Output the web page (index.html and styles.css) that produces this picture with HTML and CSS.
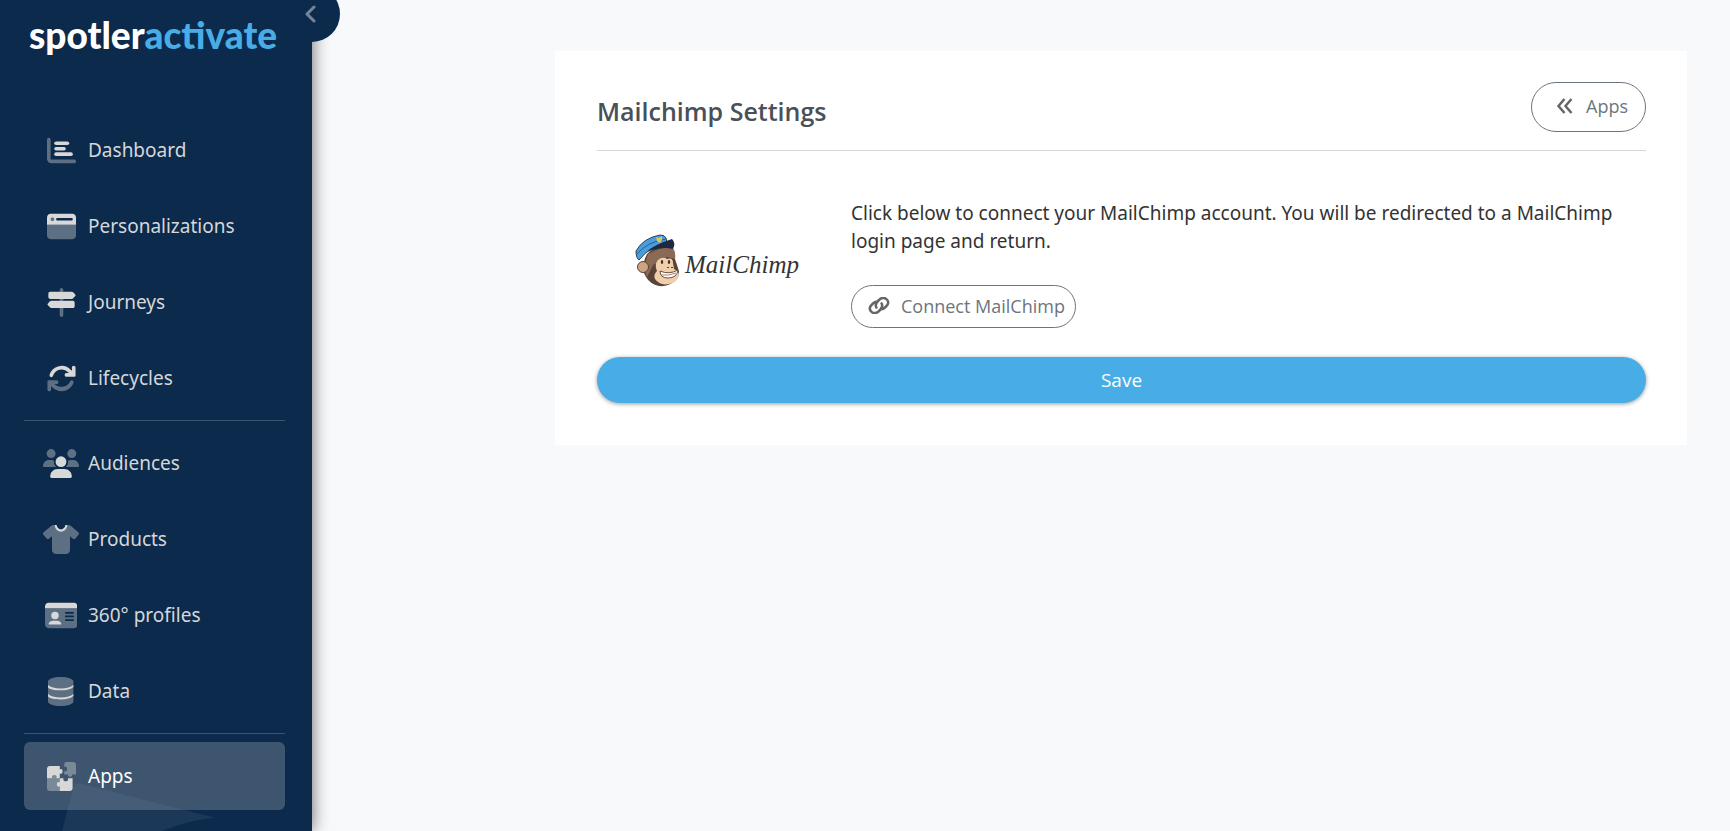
FILE: index.html
```html
<!DOCTYPE html>
<html lang="en">
    <head>
        <meta charset="UTF-8">
        <meta name="viewport" content="width=device-width, initial-scale=1.0">
        <title>Mailchimp Settings</title>
        <link rel="stylesheet" href="styles.css">
    </head>
    <body>
        <div class="layout">
            <aside class="sidebar">
                <button class="toggle" type="button" aria-label="Collapse menu">
                    <svg viewBox="0 0 12 18"><path d="M10 2L3 9l7 7"/></svg>
                </button>
                <a class="brand" href="#">spotler<span>activate</span></a>
                <nav class="nav">
                    <a class="nav-item" href="#">
                        <span class="nav-icon"><svg viewBox="0 0 512 512">
                            <path class="dim" d="M32 32c17.700 0 32 14.300 32 32v336c0 8.800 7.200 16 16 16h400c17.700 0 32 14.300 32 32s-14.300 32-32 32H80c-44.200 0-80-35.800-80-80V64c0-17.700 14.300-32 32-32z"/>
                            <rect x="128" y="96" width="264" height="64" rx="32"/>
                            <rect x="128" y="192" width="204" height="64" rx="32"/>
                            <rect x="128" y="288" width="328" height="64" rx="32"/>
                        </svg></span>
                        Dashboard
                    </a>
                    <a class="nav-item" href="#">
                        <span class="nav-icon"><svg viewBox="0 0 512 512">
                            <path class="dim" d="M0 224h512v192c0 35-29 64-64 64H64c-35 0-64-29-64-64z"/>
                            <path fill-rule="evenodd" d="M64 32h384c35 0 64 29 64 64v128H0V96c0-35 29-64 64-64zM184 104a24 24 0 0 0 0 48h248a24 24 0 0 0 0-48zM96 96a32 32 0 1 0 0 64 32 32 0 0 0 0-64z"/>
                            <circle class="dim" cx="96" cy="128" r="32"/>
                        </svg></span>
                        Personalizations
                    </a>
                    <a class="nav-item" href="#">
                        <span class="nav-icon"><svg viewBox="0 0 512 512">
                            <path class="dim" d="M224 64V32a32 32 0 0 1 64 0v32zM224 192h64v32h-64zM224 352h64v128a32 32 0 0 1-64 0z"/>
                            <path d="M56 64h382c9 0 17 4 23 10l38 42c7 7 7 17 0 24l-38 42c-6 6-14 10-23 10H56c-18 0-32-14-32-32V96c0-18 14-32 32-32z"/>
                            <path d="M456 224H74c-9 0-17 4-23 10l-38 42c-7 7-7 17 0 24l38 42c6 6 14 10 23 10h382c18 0 32-14 32-32v-64c0-18-14-32-32-32z"/>
                        </svg></span>
                        Journeys
                    </a>
                    <a class="nav-item" href="#">
                        <span class="nav-icon"><svg viewBox="0 0 512 512">
                            <path class="line" d="M76 200A190 190 0 0 1 396 124l44 44"/>
                            <path d="M472 32c18 0 32 14 32 32v144c0 9-7 16-16 16H344c-20 0-32-14-32-32s12-32 32-32h96V64c0-18 14-32 32-32z"/>
                            <path d="M440 110v80h-80z"/>
                            <g class="dim" transform="rotate(180 256 256)">
                                <path d="M472 32c18 0 32 14 32 32v144c0 9-7 16-16 16H344c-20 0-32-14-32-32s12-32 28-32h40l-16-14C278 78 150 104 102 208c-18 34-70 12-58-26C96 32 290-20 410 92l30 28V64c0-18 14-32 32-32z"/>
                            </g>
                        </svg></span>
                        Lifecycles
                    </a>
                    <hr class="nav-rule">
                    <a class="nav-item" href="#">
                        <span class="nav-icon"><svg viewBox="0 0 640 512">
                            <g class="dim">
                                <circle cx="144" cy="80" r="80"/>
                                <circle cx="512" cy="80" r="80"/>
                                <path d="M0 298.700C0 239.800 47.800 192 106.700 192h42.700c15.900 0 31 3.500 44.600 9.700-1.300 7.200-1.900 14.700-1.900 22.300 0 38.200 16.800 72.500 43.300 96H21.300C9.600 320 0 310.400 0 298.700z"/>
                                <path d="M640 298.700c0-58.900-47.800-106.700-106.700-106.700h-42.700c-15.900 0-31 3.500-44.600 9.700 1.300 7.200 1.900 14.700 1.900 22.300 0 38.200-16.800 72.500-43.300 96h214.100c11.700 0 21.300-9.600 21.300-21.300z"/>
                            </g>
                            <circle cx="320" cy="224" r="96"/>
                            <path d="M261 352h118c74 0 133 60 133 133 0 15-12 27-27 27H155c-15 0-27-12-27-27 0-73 59-133 133-133z"/>
                        </svg></span>
                        Audiences
                    </a>
                    <a class="nav-item" href="#">
                        <span class="nav-icon"><svg viewBox="0 0 640 512">
                            <path class="dim" d="M211.800 0C235 50 277 80 320 80s85-30 108.200-80h12.600c22.500 0 44.200 7.900 61.500 22.300l126.200 105.100c6.600 5.500 10.700 13.500 11.400 22.100s-2.100 17.100-7.800 23.600l-56 64c-11.400 13.100-31.200 14.600-44.600 3.500L480 197.700V448c0 35.300-28.700 64-64 64H224c-35.300 0-64-28.700-64-64V197.700l-51.500 42.900c-13.300 11.100-33.100 9.600-44.600-3.500l-56-64c-5.700-6.500-8.500-15-7.800-23.600s4.800-16.600 11.400-22.100L137.700 22.300C155 7.900 176.700 0 199.200 0z"/>
                            <path d="M208 0h34c6 44 38 76 78 76s72-32 78-76h34c-4 68-50 116-112 116S212 68 208 0z"/>
                        </svg></span>
                        Products
                    </a>
                    <a class="nav-item" href="#">
                        <span class="nav-icon"><svg viewBox="0 0 576 512">
                            <path class="dim" fill-rule="evenodd" d="M0 128h576v288c0 35-29 64-64 64H64c-35 0-64-29-64-64zM368 192a16 16 0 0 0 0 32h128a16 16 0 0 0 0-32zM368 256a16 16 0 0 0 0 32h128a16 16 0 0 0 0-32zM368 320a16 16 0 0 0 0 32h128a16 16 0 0 0 0-32z"/>
                            <path d="M64 32h448c35 0 64 29 64 64v32H0V96c0-35 29-64 64-64z"/>
                            <circle cx="176" cy="256" r="66"/>
                            <path d="M144 348h64c44 0 80 24 80 56 0 7-7 12-16 12H80c-9 0-16-5-16-12 0-32 36-56 80-56z"/>
                        </svg></span>
                        360° profiles
                    </a>
                    <a class="nav-item" href="#">
                        <span class="nav-icon"><svg viewBox="0 0 448 512">
                            <path class="dim" d="M448 80v352c0 44-100 80-224 80S0 476 0 432V80C0 36 100 0 224 0s224 36 224 80z"/>
                            <path d="M0 142c40 40 120 62 224 62s184-22 224-62v34c-40 38-120 60-224 60S0 214 0 176zM0 302c40 40 120 62 224 62s184-22 224-62v34c-40 38-120 60-224 60S0 374 0 336z"/>
                        </svg></span>
                        Data
                    </a>
                    <hr class="nav-rule">
                    <a class="nav-item active" href="#">
                        <span class="nav-icon"><svg viewBox="0 0 512 512">
                            <path d="M48 72h178v60c10-8 20-12 30-8 26 12 26 70 0 82-10 4-20 0-30-8v88h-66c6-12 10-20 8-30-8-32-70-32-80 0-2 10 2 18 10 30H0V120c0-26 22-48 48-48z"/>
                            <path class="dim" d="M344 0h120c26 0 48 22 48 48v172h-72c4 10 6 16 2 24-12 22-58 22-70 0-4-8-2-14 2-24h-70v-62c12 6 24 8 34 2 26-14 24-66-2-78-10-4-20-2-32 4V48c0-26 14-48 40-48z"/>
                            <path class="dim" d="M0 286h98c-8-12-12-20-10-30 10-32 72-32 80 0 2 10-2 18-8 30h66v74c-12-8-22-12-32-8-30 14-30 70 0 84 10 4 20 0 32-8v84H48c-26 0-48-22-48-48z"/>
                            <path d="M226 286h66c-4 12-6 20-2 30 12 34 68 34 80 0 4-10 2-18-2-30h84v178c0 26-22 48-48 48H226v-84c-12 8-22 12-32 8-30-14-30-70 0-84 10-4 20 0 32 8z"/>
                        </svg></span>
                        Apps
                    </a>
                </nav>
                <svg class="flare" viewBox="0 0 152 48"><path d="M0 48L11 6q2-7 9-5l130 33q3 1 0 1-22 2-50 13z"/></svg>
            </aside>
            <main class="content">
                <section class="card">
                    <header class="card-header">
                        <h1>Mailchimp Settings</h1>
                        <a class="btn btn-back" href="#">
                            <svg viewBox="0 0 16 16"><path d="M8 1L2 8l6 7M15 1L9 8l6 7"/></svg>
                            Apps
                        </a>
                    </header>
                    <form class="settings">
                        <div class="row">
                            <div class="app-logo">
                                <svg viewBox="0 0 46 54">
                                    <!-- head and ears -->
                                    <path fill="#5b4338" d="M12 20Q20 12 33 12q8 2 7 13l3 9q3 8-3 13-7 6-16 5-9-2-13-9-6-9 1-23z"/>
                                    <path fill="#8b6a55" d="M13 20q10-6 24-7 4 4 3 12l-8-2-14 8-6 12q-4-8 1-23z"/>
                                    <circle cx="8" cy="33" r="5.500" fill="#cda483" stroke="#5b4338"/>
                                    <path fill="#efcfac" d="M23 26q5-4 9-1 6-2 6 4l1 6q5 2 5 6-2 8-10 9-9 2-14-5-2-4 2-8-3-6 1-11z"/>
                                    <path fill="#fff" stroke="#6b5040" d="M25 37q9 4 18-1-1 8-10 8-8 0-8-7z"/>
                                    <path fill="none" stroke="#a78266" d="M26 41q8 1 15-2"/>
                                    <ellipse cx="27" cy="28" rx="1.200" ry="2" fill="#41302a"/>
                                    <ellipse cx="34" cy="28" rx="1.200" ry="2" fill="#41302a"/>
                                    <path fill="#5b4338" d="M32 33h2v1h-2zM36 33h2v1h-2z"/>
                                    <!-- cap -->
                                    <path fill="#4a9ddd" stroke="#2d4055" d="M1 17Q8 4 25 1q5 0 6 3l1 5Q16 11 4 26q-3-2-3-9z"/>
                                    <path fill="none" stroke="#2c5f94" d="M2 20Q12 8 31 5"/>
                                    <path fill="#1d2940" d="M12 18q6-7 25-13 4 4 1 10-12-3-26 3z"/>
                                    <path fill="#e2c44f" d="M21 3l3 1 3-2v4l-2 3-3-2z"/>
                                </svg>
                                <span>MailChimp</span>
                            </div>
                            <div class="connect">
                                <p>Click below to connect your MailChimp account. You will be redirected to a MailChimp login page and return.</p>
                                <button class="btn btn-connect" type="button">
                                    <svg viewBox="0 0 22 17"><path d="M9 11.500C7 9 8 6 10 4l1.500-1.500c5-4 11 1 7.500 6L17 10.500c-2 2-4 2-5.500 1M13 5.500c2 2.500 1 5.500-1 7.500l-1.500 1.500c-5 4-11-1-7.500-6L5 6.500c2-2 4-2 5.500-1"/></svg>
                                    Connect MailChimp
                                </button>
                            </div>
                        </div>
                        <button class="btn-save" type="submit">Save</button>
                    </form>
                </section>
            </main>
        </div>
    </body>
</html>
```
FILE: styles.css
```css
*{
    box-sizing: border-box;
}
body{
    margin: 0;
    background-color: #f8f9fb;
    color: #333;
    font-family: "Open Sans", "Noto Sans", sans-serif;
    font-size: 18px;
}
a{
    color: inherit;
    text-decoration: none;
}
button{
    font-family: inherit;
    font-size: 18px;
    cursor: pointer;
}
.layout{
    display: flex;
    height: 100vh;
    overflow: hidden;
}

/* sidebar */
.sidebar{
    position: relative;
    flex: none;
    width: 312px;
    padding: 0 27px 0 24px;
    background-color: #0c2a4b;
    box-shadow: 0 0 16px rgba(0, 0, 0, 0.6);
}
.toggle{
    position: absolute;
    top: -14px;
    right: -28px;
    width: 56px;
    height: 56px;
    padding: 0 0 0 20px;
    border: none;
    border-radius: 50%;
    background-color: #0c2a4b;
}
.toggle svg{
    display: block;
    width: 12px;
    height: 18px;
    fill: none;
    stroke: #74849a;
    stroke-width: 3;
    stroke-linecap: round;
    stroke-linejoin: round;
}
.brand{
    display: block;
    height: 116px;
    padding: 11px 0 0 5px;
    color: #fff;
    font-family: Lato, sans-serif;
    font-size: 37px;
    font-weight: 900;
    line-height: 48px;
}
.brand span{
    color: #48ade6;
}
.nav{
    display: flex;
    flex-direction: column;
    gap: 8px;
    font-family: "Noto Sans", sans-serif;
}
.nav-item{
    display: flex;
    align-items: center;
    gap: 9px;
    height: 68px;
    padding-left: 19px;
    border-radius: 6px;
    color: #d6d7d9;
    font-size: 19px;
}
.nav-item.active{
    background-color: #3d556f;
    color: #fff;
}
.nav-icon{
    display: flex;
    justify-content: center;
    width: 36px;
}
.nav-icon svg{
    height: 29px;
    fill: #d8d8d8;
}
.nav-icon .dim{
    opacity: 0.4;
}
.nav-icon .line{
    fill: none;
    stroke: #d8d8d8;
    stroke-width: 64;
    stroke-linecap: round;
}
.nav-rule{
    width: 100%;
    height: 1px;
    margin: 0;
    border: none;
    background-color: #3d556f;
}
.flare{
    position: absolute;
    left: 62px;
    bottom: 0;
    width: 152px;
    height: 48px;
    fill: rgba(120, 140, 170, 0.14);
    pointer-events: none;
}

/* settings card */
.content{
    flex: 1;
    padding: 51px 43px 0 243px;
}
.card{
    padding: 31px 41px 42px 42px;
    background-color: #fff;
}
.card-header{
    display: flex;
    justify-content: space-between;
    padding-bottom: 18px;
    border-bottom: 1px solid #d6d8da;
}
.card-header h1{
    margin: 12px 0 0;
    color: #495057;
    font-size: 25px;
    font-weight: 600;
    line-height: 34px;
}
.btn{
    display: inline-flex;
    align-items: center;
    border: 1px solid #6c757d;
    border-radius: 25px;
    background-color: #fff;
    color: #6c757d;
}
.btn svg{
    fill: none;
    stroke: #666;
    stroke-width: 2.5;
}
.btn-back{
    gap: 13px;
    height: 50px;
    padding: 0 17px 2px 24px;
}
.btn-back svg{
    width: 17px;
    height: 16px;
}
.btn-connect{
    gap: 11px;
    height: 43px;
    padding: 0 10px 2px 16px;
}
.btn-connect svg{
    width: 22px;
    height: 17px;
}
.row{
    display: grid;
    grid-template-columns: 240px 1fr;
    gap: 14px;
    padding: 48px 0 29px;
}
.app-logo{
    display: flex;
    align-items: center;
    justify-content: center;
    gap: 4px;
    height: 124px;
}
.app-logo svg{
    width: 46px;
    height: 54px;
}
.app-logo span{
    padding-top: 8px;
    color: #333;
    font-family: "Liberation Serif", serif;
    font-size: 25px;
    font-style: italic;
}
.connect p{
    margin: 0 0 30px;
    font-family: "Noto Sans", sans-serif;
    font-size: 19px;
    line-height: 28px;
}
.btn-save{
    display: block;
    width: 100%;
    height: 46px;
    padding-bottom: 2px;
    border: none;
    border-radius: 23px;
    background-color: #48ade6;
    box-shadow: 0 1px 4px rgba(0, 0, 0, 0.4);
    color: #fff;
    font-size: 19px;
}
```
